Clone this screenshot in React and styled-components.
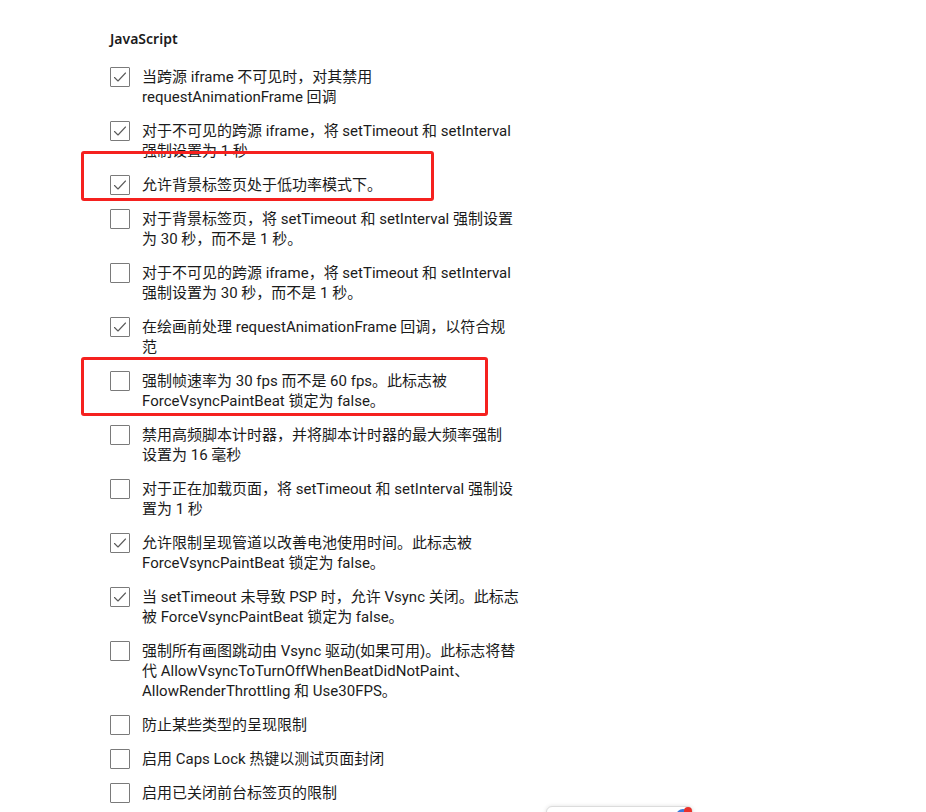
import styled, { createGlobalStyle } from 'styled-components';

const GlobalStyle = createGlobalStyle`
  html, body {
    margin: 0;
    padding: 0;
    background: #ffffff;
  }
  body {
    font-family: Roboto, "Noto Sans CJK SC", sans-serif;
    color: #1b1b1b;
  }
`;

const Page = styled.div`
  position: relative;
  width: 926px;
  height: 812px;
  overflow: hidden;
  box-sizing: border-box;
  padding: 29px 0 0 110px;
`;

const Heading = styled.h2`
  margin: 0 0 18px 0;
  font-family: "Noto Sans", sans-serif;
  font-size: 14px;
  line-height: 20px;
  font-weight: 600;
  color: #1b1b1b;
`;

const List = styled.div`
  display: flex;
  flex-direction: column;
  gap: 14px;
`;

const Row = styled.label`
  display: flex;
  align-items: flex-start;
  gap: 12px;
`;

const Box = styled.span`
  flex: none;
  width: 20px;
  height: 20px;
  box-sizing: border-box;
  border: 1px solid #7a7a7a;
  border-radius: 1px;
  background: #ffffff;
  display: flex;
  align-items: center;
  justify-content: center;
`;

const Label = styled.span`
  font-size: 15px;
  line-height: 20px;
  color: #1b1b1b;
  white-space: nowrap;
`;

const Line = styled.span`
  display: block;
`;

const Highlight = styled.div`
  position: absolute;
  left: ${({ $x }) => $x}px;
  top: ${({ $y }) => $y}px;
  width: ${({ $w }) => $w}px;
  height: ${({ $h }) => $h}px;
  box-sizing: border-box;
  border: 3px solid #f5211f;
  border-radius: 3px;
  pointer-events: none;
`;

const Popup = styled.div`
  position: absolute;
  left: 546px;
  top: 806px;
  width: 147px;
  height: 40px;
  box-sizing: border-box;
  border: 1px solid #dcdcdc;
  border-radius: 6px;
  background: #ffffff;
  box-shadow: 0 0 4px rgba(0, 0, 0, 0.12);
`;

const Badge = styled.span`
  position: absolute;
  right: 2px;
  top: 2px;
  width: 14px;
  height: 14px;
  border-radius: 50%;
  background: #3b7ad9;
  &::after {
    content: '';
    position: absolute;
    right: -2px;
    top: -2px;
    width: 8px;
    height: 8px;
    border-radius: 50%;
    background: #e8312b;
  }
`;

const Check = () => (
  <svg width="16" height="16" viewBox="0 0 16 16" fill="none">
    <polyline
      points="2.5,8.5 6,12 13.5,4"
      stroke="#5a5a5a"
      strokeWidth="1.1"
      strokeLinecap="round"
      strokeLinejoin="round"
    />
  </svg>
);

const flags = [
  { checked: true, lines: ['当跨源 iframe 不可见时，对其禁用', 'requestAnimationFrame 回调'] },
  { checked: true, lines: ['对于不可见的跨源 iframe，将 setTimeout 和 setInterval', '强制设置为 1 秒'] },
  { checked: true, lines: ['允许背景标签页处于低功率模式下。'] },
  { checked: false, lines: ['对于背景标签页，将 setTimeout 和 setInterval 强制设置', '为 30 秒，而不是 1 秒。'] },
  { checked: false, lines: ['对于不可见的跨源 iframe，将 setTimeout 和 setInterval', '强制设置为 30 秒，而不是 1 秒。'] },
  { checked: true, lines: ['在绘画前处理 requestAnimationFrame 回调，以符合规', '范'] },
  { checked: false, lines: ['强制帧速率为 30 fps 而不是 60 fps。此标志被', 'ForceVsyncPaintBeat 锁定为 false。'] },
  { checked: false, lines: ['禁用高频脚本计时器，并将脚本计时器的最大频率强制', '设置为 16 毫秒'] },
  { checked: false, lines: ['对于正在加载页面，将 setTimeout 和 setInterval 强制设', '置为 1 秒'] },
  { checked: true, lines: ['允许限制呈现管道以改善电池使用时间。此标志被', 'ForceVsyncPaintBeat 锁定为 false。'] },
  { checked: true, lines: ['当 setTimeout 未导致 PSP 时，允许 Vsync 关闭。此标志', '被 ForceVsyncPaintBeat 锁定为 false。'] },
  {
    checked: false,
    lines: [
      '强制所有画图跳动由 Vsync 驱动(如果可用)。此标志将替',
      '代 AllowVsyncToTurnOffWhenBeatDidNotPaint、',
      'AllowRenderThrottling 和 Use30FPS。',
    ],
  },
  { checked: false, lines: ['防止某些类型的呈现限制'] },
  { checked: false, lines: ['启用 Caps Lock 热键以测试页面封闭'] },
  { checked: false, lines: ['启用已关闭前台标签页的限制'] },
];

const App = () => (
  <>
    <GlobalStyle />
    <Page>
      <Heading>JavaScript</Heading>
      <List>
        {flags.map((flag, i) => (
          <Row key={i}>
            <Box>{flag.checked && <Check />}</Box>
            <Label>
              {flag.lines.map((line, j) => (
                <Line key={j}>{line}</Line>
              ))}
            </Label>
          </Row>
        ))}
      </List>
      <Highlight $x={81} $y={151} $w={353} $h={50} />
      <Highlight $x={81} $y={357} $w={407} $h={59} />
      <Popup>
        <Badge />
      </Popup>
    </Page>
  </>
);

export default App;
